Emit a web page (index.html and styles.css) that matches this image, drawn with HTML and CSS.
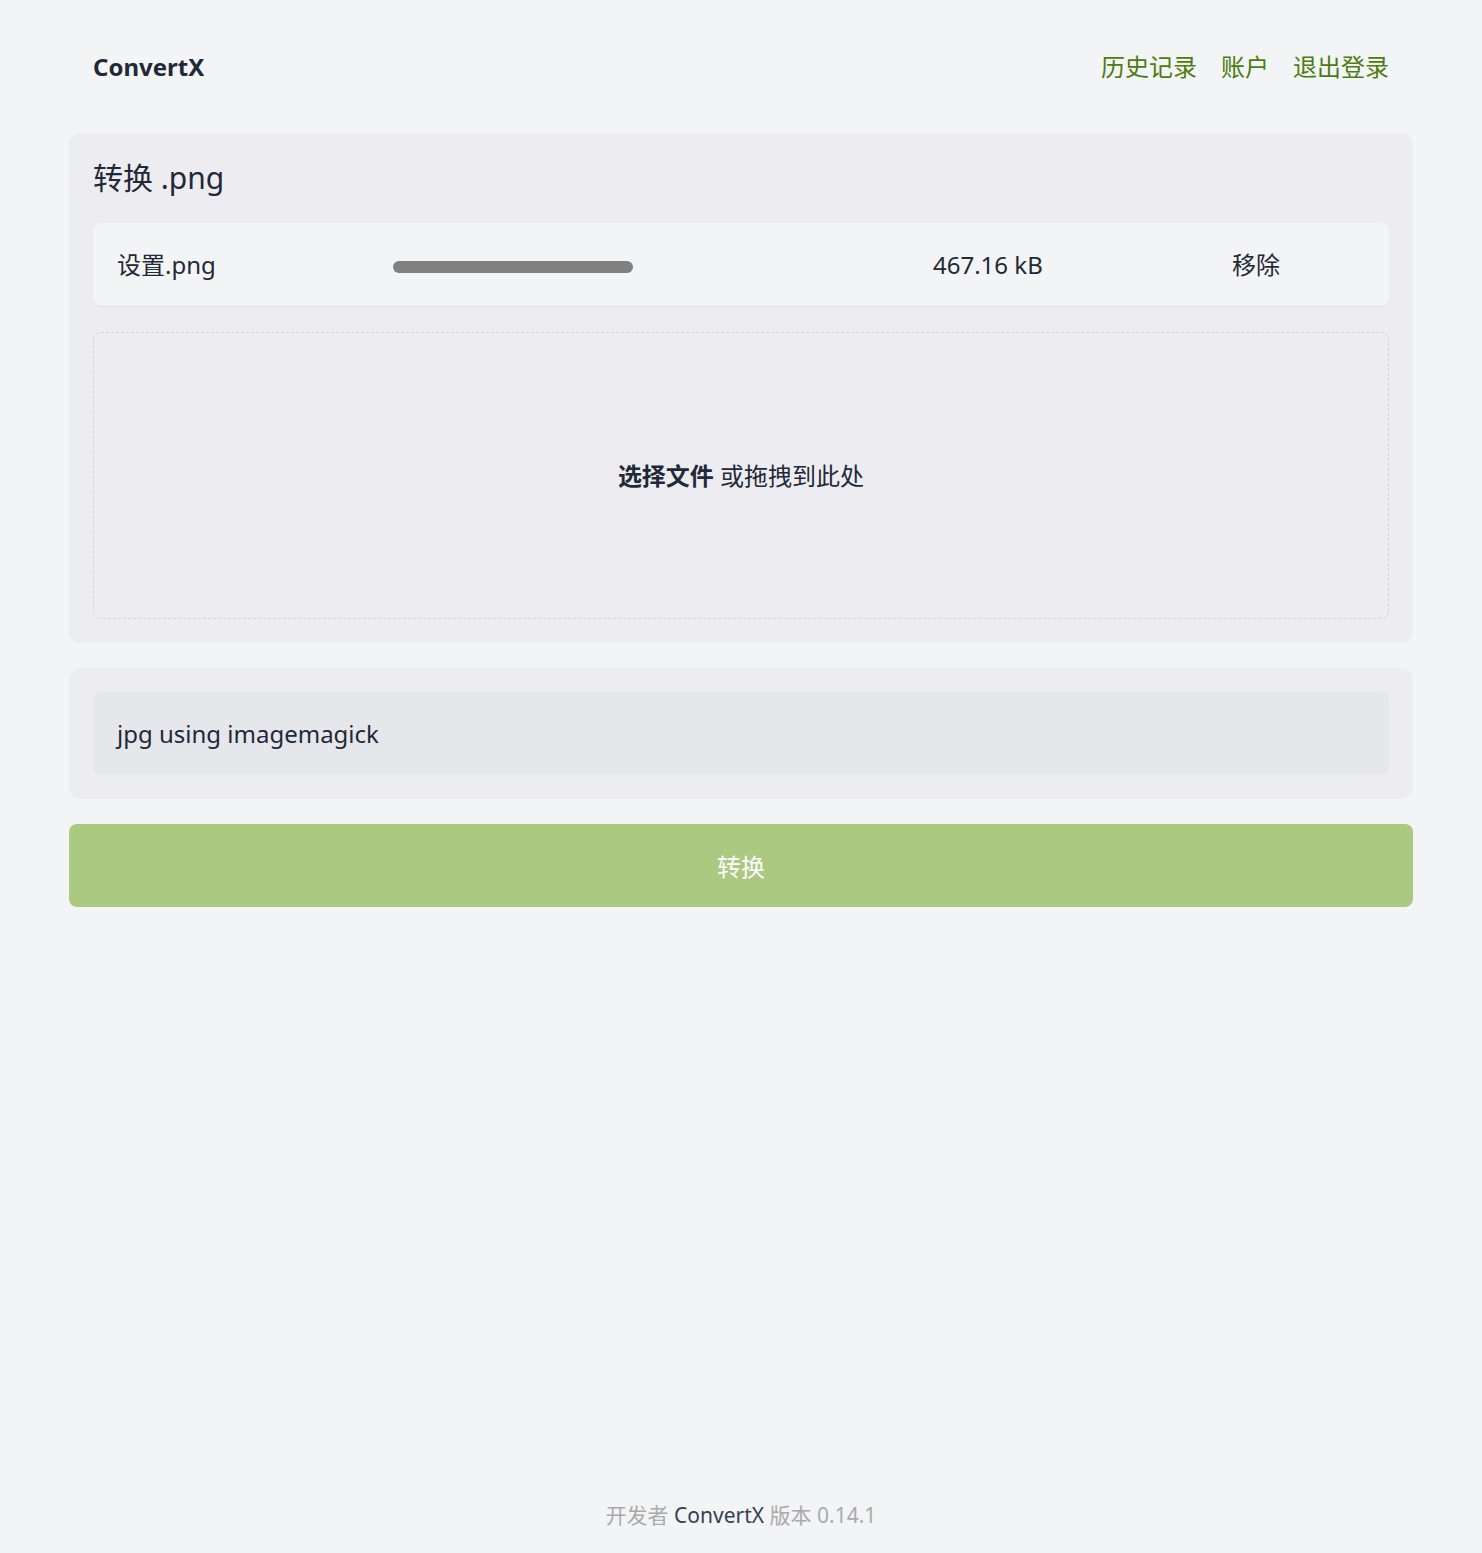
FILE: index.html
```html
<!DOCTYPE html>
<html lang="zh-CN">
<head>
    <meta charset="UTF-8">
    <meta name="viewport" content="width=device-width, initial-scale=1.0">
    <title>ConvertX</title>
    <link rel="stylesheet" href="styles.css">
</head>
<body>
    <div class="page">
        <header class="site-header">
            <a class="brand" href="#">ConvertX</a>
            <nav class="nav-links">
                <a href="#">历史记录</a>
                <a href="#">账户</a>
                <a href="#">退出登录</a>
            </nav>
        </header>

        <main class="main">
            <section class="panel">
                <h1 class="panel-title">转换 .png</h1>
                <div class="file-row">
                    <span class="file-name">设置.png</span>
                    <span class="file-progress"><span class="progress-bar"></span></span>
                    <span class="file-size">467.16 kB</span>
                    <span class="file-remove">移除</span>
                </div>
                <div class="dropzone">
                    <span><b>选择文件</b> 或拖拽到此处</span>
                </div>
            </section>

            <section class="panel">
                <div class="target-select">jpg using imagemagick</div>
            </section>

            <button class="convert-button">转换</button>
        </main>

        <footer class="site-footer">
            开发者 <a href="#">ConvertX</a> 版本 0.14.1
        </footer>
    </div>
</body>
</html>
```

FILE: styles.css
```css
html, body {
    margin: 0;
    padding: 0;
}

body {
    background-color: #f3f4f6;
    color: #1f2937;
    font-family: "Noto Sans", "Noto Sans CJK SC", sans-serif;
    font-size: 24px;
    line-height: 36px;
}

.page {
    min-height: 100vh;
    display: flex;
    flex-direction: column;
    width: 1344px;
    margin: 0 auto;
}

/* 顶部导航 */
.site-header {
    height: 133px;
    display: flex;
    align-items: center;
    justify-content: space-between;
    padding: 0 24px;
}

.brand {
    color: #1f2937;
    font-weight: bold;
    text-decoration: none;
}

.nav-links {
    display: flex;
    gap: 24px;
}

.nav-links a {
    color: #4d7c0f;
    text-decoration: none;
}

.main {
    display: flex;
    flex-direction: column;
    gap: 25px;
}

.panel {
    background-color: #ededf1;
    border-radius: 12px;
    padding: 24px;
}

.panel-title {
    margin: 0 0 24px 0;
    font-size: 30px;
    line-height: 42px;
    font-weight: normal;
}

/* 文件行 */
.file-row {
    display: grid;
    grid-template-columns: 276px 540px 299px 1fr;
    align-items: center;
    background-color: #f3f4f6;
    border-radius: 8px;
    padding: 24px;
    line-height: 35px;
    box-shadow: 0 1px 1px rgba(0, 0, 0, 0.05);
}

.file-progress {
    display: flex;
    align-items: center;
    padding-top: 4px;
}

.progress-bar {
    display: block;
    width: 240px;
    height: 12px;
    border-radius: 6px;
    background-color: #808080;
}

.dropzone {
    margin-top: 26px;
    height: 285px;
    border: 1px dashed #d1d5db;
    border-radius: 8px;
    display: flex;
    align-items: center;
    justify-content: center;
}

.target-select {
    background-color: #e5e7eb;
    border-radius: 8px;
    padding: 24px;
    line-height: 35px;
}

.convert-button {
    height: 83px;
    border: none;
    border-radius: 8px;
    background-color: #acc982;
    color: #ffffff;
    font-family: inherit;
    font-size: 24px;
}

/* 页脚 */
.site-footer {
    margin-top: auto;
    text-align: center;
    color: #aaaaaa;
    font-size: 21px;
    line-height: 32px;
    padding-bottom: 22px;
}

.site-footer a {
    color: #374151;
    text-decoration: none;
}
```
